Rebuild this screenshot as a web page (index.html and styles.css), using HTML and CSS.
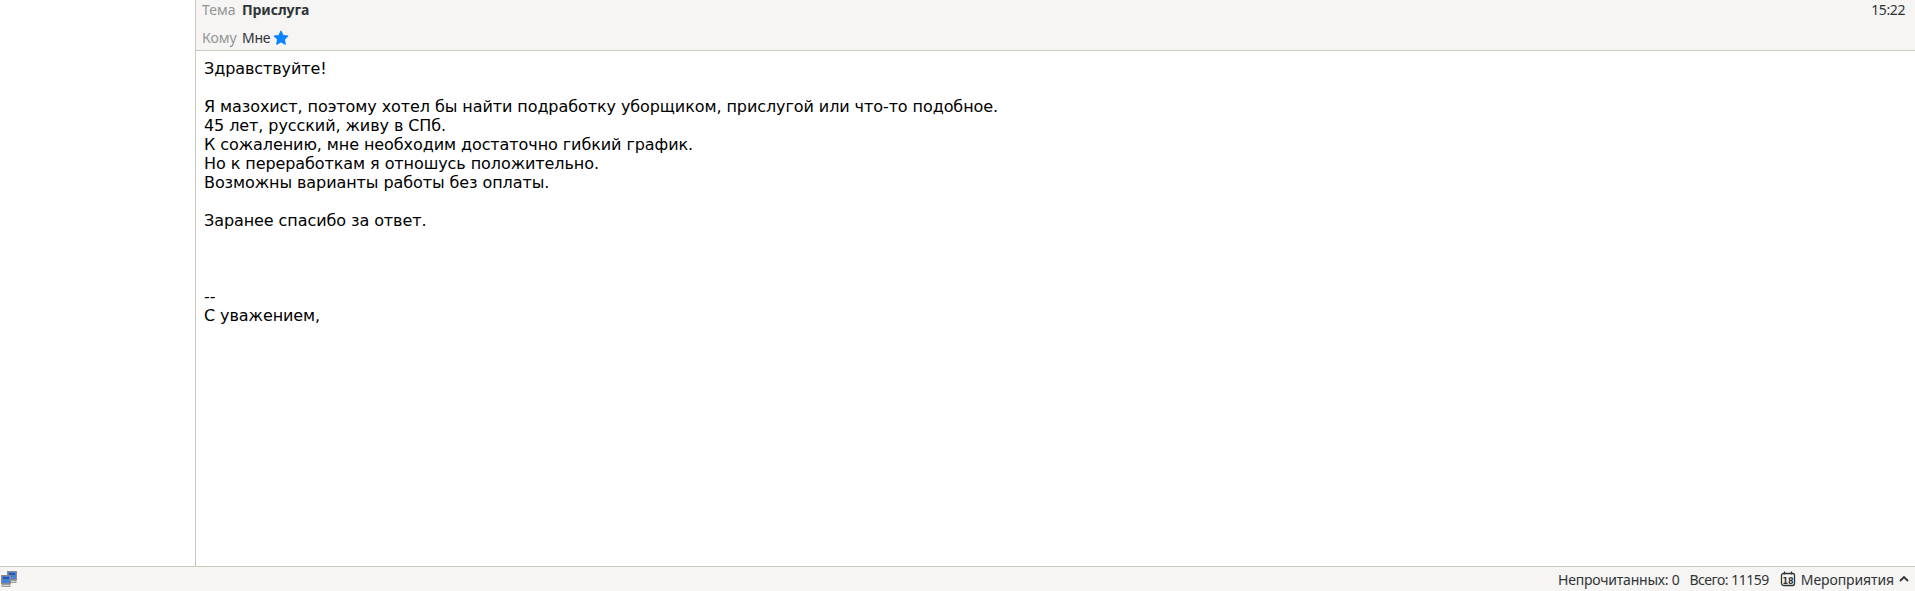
FILE: index.html
```html
<!DOCTYPE html>
<html lang="ru">
<head>
<meta charset="utf-8">
<title>Прислуга</title>
<link rel="stylesheet" href="styles.css">
</head>
<body>
<div class="app">
  <div class="main">
    <aside class="sidebar"></aside>
    <section class="message">
      <header class="headers">
        <div class="row row-subject">
          <span class="label">Тема</span>
          <span class="subject">Прислуга</span>
          <span class="time">15:22</span>
        </div>
        <div class="row row-to">
          <span class="label">Кому</span>
          <span class="to">Мне</span>
          <svg class="star" width="16" height="16" viewBox="0 0 16 16"><path d="M8 1.2l2 4.3 4.7.6-3.4 3.3.9 4.7L8 11.8l-4.2 2.3.9-4.700L1.3 6.100 6 5.500z" fill="#0a84ff" stroke="#0a84ff" stroke-width="1.200" stroke-linejoin="round"/></svg>
        </div>
      </header>
      <div class="body">
        <p>Здравствуйте!</p>
        <p class="blank">&nbsp;</p>
        <p>Я мазохист, поэтому хотел бы найти подработку уборщиком, прислугой или что-то подобное.</p>
        <p>45 лет, русский, живу в СПб.</p>
        <p>К сожалению, мне необходим достаточно гибкий график.</p>
        <p>Но к переработкам я отношусь положительно.</p>
        <p>Возможны варианты работы без оплаты.</p>
        <p class="blank">&nbsp;</p>
        <p>Заранее спасибо за ответ.</p>
        <p class="blank">&nbsp;</p>
        <p class="blank">&nbsp;</p>
        <p class="blank">&nbsp;</p>
        <p>--</p>
        <p>С уважением,</p>
      </div>
    </section>
  </div>
  <footer class="status">
    <svg class="net" width="18" height="16" viewBox="0 0 18 16">
      <rect x="7.500" y="0.500" width="9" height="8" fill="#4c7fd6" stroke="#8a8a86"/>
      <rect x="9" y="2" width="6" height="2" fill="#2a55a8"/>
      <rect x="8" y="9.500" width="8" height="2" fill="#d8d8d4" stroke="#8a8a86" stroke-width="0.800"/>
      <rect x="1.500" y="4.500" width="9" height="8" fill="#4c7fd6" stroke="#8a8a86"/>
      <rect x="3" y="6" width="6" height="2" fill="#2a55a8"/>
      <rect x="2" y="13.500" width="8" height="2" fill="#d8d8d4" stroke="#8a8a86" stroke-width="0.800"/>
    </svg>
    <div class="status-right">
      <span class="count">Непрочитанных: 0</span>
      <span class="count count-total">Всего: 11159</span>
      <svg class="cal" width="16" height="16" viewBox="0 0 16 16">
        <rect x="1.500" y="2.500" width="13" height="12" rx="2" fill="none" stroke="#2e3436" stroke-width="1.300"/>
        <path d="M4.500 0.500v3M11.500 0.500v3" stroke="#2e3436" stroke-width="1.300"/>
        <text class="cal-day" x="8" y="12.500" text-anchor="middle">18</text>
      </svg>
      <span class="events">Мероприятия</span>
      <svg class="chev" width="10" height="8" viewBox="0 0 10 8"><path d="M1 6l4-4 4 4" fill="none" stroke="#2e3436" stroke-width="1.800"/></svg>
    </div>
  </footer>
</div>
</body>
</html>
```
FILE: styles.css
```css
html, body {
  margin: 0;
  height: 100%;
  overflow: hidden;
  background: #fff;
}
.app {
  display: flex;
  flex-direction: column;
  height: 591px;
}
.main {
  display: flex;
  flex: 1;
  min-height: 0;
}
.sidebar {
  width: 195px;
  flex: none;
  border-right: 1px solid #c9c5bf;
}
.message {
  flex: 1;
  display: flex;
  flex-direction: column;
}
.headers {
  height: 50px;
  background: #f6f5f4;
  border-bottom: 1px solid #cdc7c2;
  padding: 0 10px 0 6px;
  font: 14px/19px "Noto Sans", sans-serif;
  color: #2e3436;
}
.row {
  display: flex;
  align-items: center;
}
.row-subject {
  height: 19px;
}
.row-to {
  height: 19px;
  margin-top: 9px;
}
.label {
  width: 40px;
  flex: none;
  color: #929595;
}
.subject {
  font-weight: 700;
  letter-spacing: -0.1px;
}
.to {
  letter-spacing: -0.3px;
}
.time {
  margin-left: auto;
  letter-spacing: -0.4px;
}
.star {
  margin-left: 3px;
}
.body {
  padding: 8px 8px 0 8px;
  font: 16px/19px "DejaVu Sans", sans-serif;
  letter-spacing: -0.08px;
  color: #000;
}
.body p {
  margin: 0;
}
.status {
  height: 24px;
  flex: none;
  border-top: 1px solid #cdc7c2;
  background: #f6f5f4;
  display: flex;
  align-items: center;
  justify-content: space-between;
  font: 14px/19px "Noto Sans", sans-serif;
  color: #2e3436;
}
.status-right {
  display: flex;
  align-items: center;
  padding-right: 6px;
}
.count {
  margin-right: 10px;
  letter-spacing: -0.22px;
}
.count-total {
  margin-right: 8px;
  letter-spacing: -0.5px;
}
.cal {
  margin: 0 5px 0 3px;
}
.cal-day {
  font: 700 8px "DejaVu Sans", sans-serif;
  fill: #2e3436;
}
.events {
  letter-spacing: -0.1px;
}
.chev {
  margin-left: 5px;
}
```
